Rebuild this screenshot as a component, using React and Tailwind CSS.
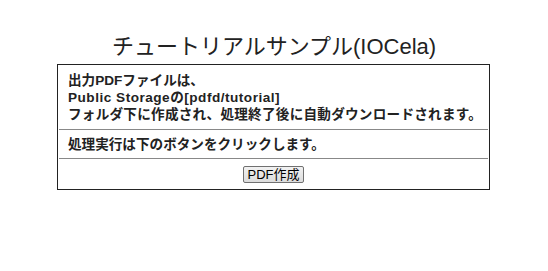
export default function App() {
  return (
    <div className="w-[548px] h-[271px] bg-white font-['Liberation_Sans','Noto_Sans_CJK_JP',sans-serif] text-[#222]">
      <h1 className="pt-[34px] h-[64px] text-center text-[22px] leading-[26px] font-normal">
        チュートリアルサンプル(IOCela)
      </h1>
      <div className="ml-[57px] w-[433px] border border-[#222]">
        <div className="pl-[10px] pr-[4px] pt-[7px] pb-[6px] text-[13.6px] leading-[17px] font-bold">
          <p>出力PDFファイルは、</p>
          <p className="tracking-[0.5px]">Public Storageの[pdfd/tutorial]</p>
          <p className="tracking-[0.25px]">フォルダ下に作成され、処理終了後に自動ダウンロードされます。</p>
        </div>
        <div className="mx-px border-t border-[#888]"></div>
        <div className="px-[10px] pt-[6px] pb-[5px] text-[13.6px] leading-[17px] font-bold">
          処理実行は下のボタンをクリックします。
        </div>
        <div className="mx-px border-t border-[#888]"></div>
        <div className="flex justify-center pt-[7px] pb-[6px]">
          <button className="h-[17px] w-[61px] rounded-[2px] border border-[#707070] bg-gradient-to-b from-[#f2f2f2] to-[#dcdcdc] text-[13px] leading-[15px] text-black">
            PDF作成
          </button>
        </div>
      </div>
    </div>
  );
}
